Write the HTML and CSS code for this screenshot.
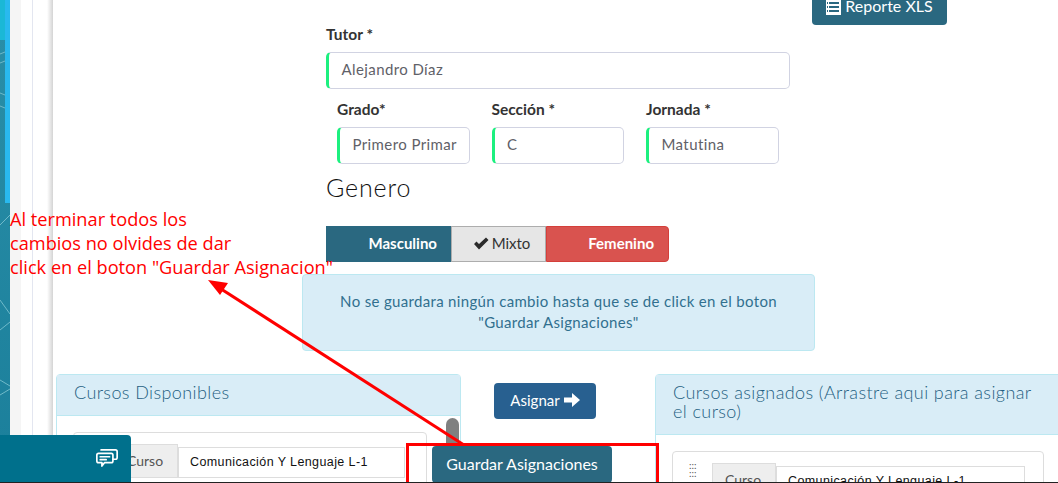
FILE: index.html
```html
<!DOCTYPE html>
<html>
  <head>
    <title>Asignacion de cursos</title>
    <link rel="stylesheet" href="styles.css">
  </head>
  <body>
    <div class="layout">
      <div class="sidebar">
        <div class="side-image">
          <svg width="10" height="483" viewBox="0 0 10 483" fill="none" stroke="#6fb9c9" stroke-width="1">
            <path d="M0 54l5-2M0 63l5-2M0 93l5 2M0 106l5 2M10 215l-10 10M0 300l10 14M0 330l10-8M0 380l10 6M0 395l10-6"/>
          </svg>
        </div>
        <div class="side-gray"></div>
        <div class="side-white"></div>
        <div class="side-shadow"></div>
      </div>

      <div class="main">
        <div class="top-bar">
          <button class="btn btn-report">
            <svg class="icon-list" width="15" height="15" viewBox="0 0 15 15">
              <rect x="0" y="0" width="15" height="15" fill="#fff"/>
              <path d="M3 2h10v2H3zM3 6h10v2H3zM3 10h10v2H3z" fill="#2a6880"/>
              <path d="M1 2h1v2H1zM1 6h1v2H1zM1 10h1v2H1z" fill="#2a6880"/>
            </svg>
            Reporte XLS
          </button>
        </div>

        <div class="form">
          <label class="label">Tutor *</label>
          <div class="input input-wide">Alejandro Díaz</div>

          <div class="form-row">
            <div class="field">
              <label class="label">Grado*</label>
              <div class="input">Primero Primar</div>
            </div>
            <div class="field">
              <label class="label">Sección *</label>
              <div class="input">C</div>
            </div>
            <div class="field">
              <label class="label">Jornada *</label>
              <div class="input">Matutina</div>
            </div>
          </div>

          <h3 class="genero">Genero</h3>

          <div class="toggle">
            <div class="toggle-item toggle-m">Masculino</div>
            <div class="toggle-item toggle-x">
              <svg width="16" height="13" viewBox="0 0 16 13"><path d="M1 7l2.500-2.500L6 7l7-6.500L15.500 3 6 12.500z" fill="#2b2b2b"/></svg>
              Mixto
            </div>
            <div class="toggle-item toggle-f">Femenino</div>
          </div>
        </div>

        <div class="alert">
          No se guardara ningún cambio hasta que se de click en el boton<br>"Guardar Asignaciones"
        </div>

        <div class="courses">
          <div class="panel panel-left">
            <div class="panel-head">Cursos Disponibles</div>
            <div class="panel-body">
              <div class="course-card">
                <div class="course-group">
                  <span class="addon">Curso</span>
                  <span class="course-input">Comunicación Y Lenguaje L-1</span>
                </div>
              </div>
              <div class="thumb"></div>
            </div>
          </div>

          <div class="middle">
            <button class="btn btn-assign">
              Asignar
              <svg width="16" height="14" viewBox="0 0 16 14"><path d="M0 4.500h8V0l8 7-8 7V9.500H0z" fill="#fff"/></svg>
            </button>
          </div>

          <div class="panel panel-right">
            <div class="panel-head">Cursos asignados (Arrastre aqui para asignar el curso)</div>
            <div class="panel-body">
              <div class="course-card card-right">
                <span class="dots">:::<br>:::</span>
                <div class="course-group">
                  <span class="addon">Curso</span>
                  <span class="course-input">Comunicación Y Lenguaje L-1</span>
                </div>
              </div>
            </div>
          </div>
        </div>
      </div>
    </div>

    <button class="btn btn-save">Guardar Asignaciones</button>

    <div class="chat">
      <svg width="22" height="18" viewBox="0 0 26 21" fill="none" stroke="#fff" stroke-width="2" stroke-linejoin="round" stroke-linecap="round">
        <path d="M3 5h15a2 2 0 0 1 2 2v7a2 2 0 0 1-2 2h-8l-3 4v-4H3a2 2 0 0 1-2-2V7a2 2 0 0 1 2-2z"/>
        <path d="M6 1h17a2 2 0 0 1 2 2v7a2 2 0 0 1-2 2h-3"/>
        <path d="M5 9h11M5 12.500h7"/>
      </svg>
    </div>

    <p class="note">Al terminar todos los<br>cambios no olvides de dar<br>click en el boton "Guardar Asignacion"</p>

    <svg class="arrow" width="1058" height="483" viewBox="0 0 1058 483">
      <path d="M464 445L218 287" stroke="#f00" stroke-width="3" fill="none"/>
      <path d="M208 280l20 3-8 12z" fill="#f00"/>
    </svg>
    <div class="red-box"></div>
    <div class="bottom-line"></div>
  </body>
</html>
```

FILE: styles.css
```css
* {
  box-sizing: border-box;
}

html, body {
  height: 100%;
}

body {
  margin: 0;
  position: relative;
  overflow: hidden;
  background: #fff;
  font-family: "Lato", sans-serif;
  color: #333;
}

.layout {
  display: flex;
  height: 483px;
  overflow: hidden;
}

/* left strips */
.sidebar {
  display: flex;
  flex: 0 0 53px;
  height: 483px;
}

.side-image {
  width: 10px;
  background:
    linear-gradient(#1bb8d6, #1bb8d6) 0 0 / 5px 40px no-repeat,
    linear-gradient(#29b9ef, #29b9ef) 5px 0 / 5px 203px no-repeat,
    linear-gradient(#2a8fa8, #1b7f9b);
}

.side-image svg {
  display: block;
}

.side-gray {
  width: 11px;
  background: #f5f5f5;
}

.side-white {
  width: 12px;
  background: #fff;
  border-right: 1px solid #e3e6f0;
}

.side-shadow {
  width: 20px;
  background: linear-gradient(to right, #fff 0, #fff 70%, #d4d4d4 100%);
}

.main {
  flex: 1;
  min-width: 0;
}

.top-bar {
  display: flex;
  justify-content: flex-end;
  height: 25px;
  padding-right: 111px;
}

.btn {
  border: 0;
  border-radius: 4px;
  color: #fff;
  font-family: "Lato", sans-serif;
  background: #2a6880;
}

.btn-report {
  width: 135px;
  height: 25px;
  border-radius: 0 0 4px 4px;
  font-size: 16px;
  line-height: 11px;
  padding: 0;
  display: flex;
  align-items: flex-start;
  justify-content: center;
  gap: 4px;
  overflow: hidden;
}

.form {
  margin-left: 273px;
  width: 464px;
}

.label {
  display: block;
  font-size: 15.500px;
  font-weight: 700;
  color: #333;
  line-height: 18px;
}

.form > .label {
  margin-bottom: 9px;
}

.input {
  height: 37px;
  padding-left: 12.500px;
  border: 1px solid #d1d3e2;
  border-left: 3px solid #1cf07f;
  border-radius: 5px;
  font-size: 15px;
  line-height: 33px;
  color: #5f6168;
  white-space: nowrap;
  overflow: hidden;
  letter-spacing: 0.4px;
}

.form-row {
  display: flex;
  gap: 22px;
  margin: 11px 0 0 11px;
}

.field {
  width: 132.500px;
}

.field .label {
  margin-bottom: 9px;
}

.genero {
  margin: 8px 0 0;
  font-size: 25px;
  font-weight: 300;
  line-height: 30px;
  color: #111;
  letter-spacing: 0.85px;
}

.toggle {
  display: flex;
  height: 36px;
  margin-top: 24px;
  width: 343px;
  font-size: 15px;
  font-weight: 700;
}

.toggle-item {
  display: flex;
  align-items: center;
  justify-content: flex-end;
  padding-bottom: 2px;
}

.toggle-m {
  width: 125px;
  padding-right: 14px;
  background: #2a6880;
  color: #fff;
}

.toggle-x {
  width: 95px;
  padding-left: 6px;
  justify-content: center;
  gap: 3px;
  background: #e6e6e6;
  border: 1px solid #adadad;
  color: #333;
  font-weight: 400;
}

.toggle-f {
  width: 123px;
  padding-right: 14px;
  background: #d9534f;
  border: 1px solid #d43f3a;
  border-radius: 0 4px 4px 0;
  color: #fff;
}

.alert {
  width: 513px;
  height: 77px;
  margin: 12px 0 0 249px;
  padding-top: 16px;
  background: #d9edf7;
  border: 1px solid #bce8f1;
  border-radius: 4px;
  color: #31708f;
  font-size: 15px;
  letter-spacing: 0.33px;
  line-height: 21px;
  text-align: center;
}

.courses {
  display: flex;
  align-items: flex-start;
  margin: 23px 0 0 3px;
}

.panel {
  background: #fff;
  border: 1px solid #bce8f1;
  border-radius: 4px;
  height: 200px;
}

.panel-left {
  flex: 0 0 405px;
}

.panel-right {
  flex: 0 0 420px;
}

.panel-head {
  padding: 8px 17px 0;
  background: #d9edf7;
  border-bottom: 1px solid #bce8f1;
  color: #1f5f82;
  font-size: 18px;
  font-weight: 300;
  line-height: 19px;
  letter-spacing: 0.4px;
}

.panel-left .panel-head {
  height: 41px;
}

.panel-right .panel-head {
  height: 60px;
  padding-right: 30px;
}

.panel-body {
  position: relative;
  padding: 16px;
}

.panel-right .panel-body {
  padding-right: 32px;
}

.course-card {
  width: 354px;
  height: 90px;
  padding: 11px 21px 0 40px;
  border: 1px solid #ddd;
  border-radius: 4px;
}

.card-right {
  display: flex;
  width: 372px;
  padding: 11px 18px 0 16px;
}

.dots {
  width: 23px;
  margin-top: -2px;
  font-size: 10px;
  line-height: 8px;
  color: #555;
}

.course-group {
  display: flex;
  height: 34px;
  flex: 1;
}

.addon {
  width: 64px;
  padding-left: 12px;
  background: #eee;
  border: 1px solid #ddd;
  font-size: 14px;
  line-height: 32px;
  color: #555;
}

.course-input {
  flex: 1;
  height: 31px;
  margin-top: 3px;
  padding-left: 11px;
  background: #fff;
  border: 1px solid #ddd;
  font-family: "Liberation Sans", sans-serif;
  font-size: 12.500px;
  line-height: 29px;
  letter-spacing: 0.4px;
  color: #111;
  white-space: nowrap;
  overflow: hidden;
}

.thumb {
  position: absolute;
  top: 2px;
  right: 1px;
  width: 13px;
  height: 60px;
  border-radius: 7px;
  background: #808080;
}

.middle {
  flex: 0 0 194px;
  padding: 9px 0 0 33px;
}

.btn-assign {
  width: 102px;
  height: 36px;
  display: flex;
  align-items: center;
  justify-content: center;
  gap: 4px;
  padding: 0 0 2px;
  background: #286090;
  font-size: 15px;
}

/* things lying over the page */
.btn-save {
  position: absolute;
  left: 432px;
  top: 446px;
  width: 180px;
  height: 37px;
  padding: 0 0 3px;
  font-size: 16px;
}

.chat {
  position: absolute;
  left: 0;
  top: 435px;
  width: 131px;
  height: 48px;
  padding: 14px 13px 0 96px;
  background: #00708c;
  border-radius: 0 4px 0 0;
}

.note {
  position: absolute;
  left: 10px;
  top: 207px;
  margin: 0;
  color: #f00;
  font-family: "Open Sans", sans-serif;
  font-size: 18.200px;
  line-height: 24px;
  white-space: nowrap;
}

.arrow {
  position: absolute;
  left: 0;
  top: 0;
}

.red-box {
  position: absolute;
  left: 406px;
  top: 443px;
  width: 253px;
  height: 45px;
  border: 3px solid #f00;
}

.bottom-line {
  position: absolute;
  left: 0;
  right: 0;
  bottom: 0;
  height: 1px;
  background: #222;
}
```
